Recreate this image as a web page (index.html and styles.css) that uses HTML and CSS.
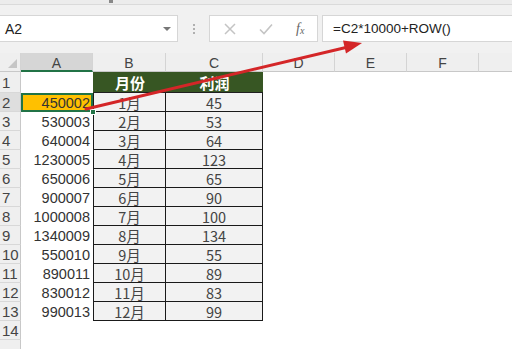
FILE: index.html
```html
<!DOCTYPE html>
<html lang="zh">
<head>
<meta charset="utf-8">
<link rel="stylesheet" href="styles.css">
</head>
<body>
<div class="app">
  <div class="ribbon-edge"><span class="mark"></span></div>
  <div class="fbar">
    <div class="namebox"><span>A2</span><span class="caret"></span></div>
    <div class="grip"><i></i><i></i><i></i></div>
    <div class="funcs">
      <svg class="ico x" width="14" height="14" viewBox="0 0 14 14"><path d="M2 2L12 12M12 2L2 12" stroke="#c4c4c4" stroke-width="1.5" fill="none"/></svg>
      <svg class="ico ok" width="16" height="14" viewBox="0 0 16 14"><path d="M2 7.5L6 11.5L14 2.5" stroke="#c4c4c4" stroke-width="1.6" fill="none"/></svg>
      <span class="fx"><i>f</i><sub>x</sub></span>
    </div>
    <div class="formula">=C2*10000+ROW()</div>
  </div>
  <div class="sheet">
    <div class="corner"><span class="tri"></span></div>
    <div class="ch sel">A</div><div class="ch">B</div><div class="ch">C</div><div class="ch">D</div><div class="ch">E</div><div class="ch">F</div><div class="ch last"></div>

    <div class="rh">1</div><div class="c a1"></div><div class="c hd b">月份</div><div class="c hd">利润</div><div class="c"></div><div class="c"></div><div class="c"></div><div class="c"></div>

    <div class="rh sel">2</div><div class="c num act">450002<span class="handle"></span></div><div class="c t b">1月</div><div class="c t">45</div><div class="c"></div><div class="c"></div><div class="c"></div><div class="c"></div>
    <div class="rh">3</div><div class="c num">530003</div><div class="c t b">2月</div><div class="c t">53</div><div class="c"></div><div class="c"></div><div class="c"></div><div class="c"></div>
    <div class="rh">4</div><div class="c num">640004</div><div class="c t b">3月</div><div class="c t">64</div><div class="c"></div><div class="c"></div><div class="c"></div><div class="c"></div>
    <div class="rh">5</div><div class="c num">1230005</div><div class="c t b">4月</div><div class="c t">123</div><div class="c"></div><div class="c"></div><div class="c"></div><div class="c"></div>
    <div class="rh">6</div><div class="c num">650006</div><div class="c t b">5月</div><div class="c t">65</div><div class="c"></div><div class="c"></div><div class="c"></div><div class="c"></div>
    <div class="rh">7</div><div class="c num">900007</div><div class="c t b">6月</div><div class="c t">90</div><div class="c"></div><div class="c"></div><div class="c"></div><div class="c"></div>
    <div class="rh">8</div><div class="c num">1000008</div><div class="c t b">7月</div><div class="c t">100</div><div class="c"></div><div class="c"></div><div class="c"></div><div class="c"></div>
    <div class="rh">9</div><div class="c num">1340009</div><div class="c t b">8月</div><div class="c t">134</div><div class="c"></div><div class="c"></div><div class="c"></div><div class="c"></div>
    <div class="rh">10</div><div class="c num">550010</div><div class="c t b">9月</div><div class="c t">55</div><div class="c"></div><div class="c"></div><div class="c"></div><div class="c"></div>
    <div class="rh">11</div><div class="c num">890011</div><div class="c t b">10月</div><div class="c t">89</div><div class="c"></div><div class="c"></div><div class="c"></div><div class="c"></div>
    <div class="rh">12</div><div class="c num">830012</div><div class="c t b">11月</div><div class="c t">83</div><div class="c"></div><div class="c"></div><div class="c"></div><div class="c"></div>
    <div class="rh">13</div><div class="c num">990013</div><div class="c t b">12月</div><div class="c t">99</div><div class="c"></div><div class="c"></div><div class="c"></div><div class="c"></div>
    <div class="rh">14</div><div class="c"></div><div class="c"></div><div class="c"></div><div class="c"></div><div class="c"></div><div class="c"></div><div class="c"></div>
    <div class="rh"></div><div class="c"></div><div class="c"></div><div class="c"></div><div class="c"></div><div class="c"></div><div class="c"></div><div class="c"></div>
  </div>
  <svg class="arrow" width="512" height="349" viewBox="0 0 512 349">
    <line x1="86" y1="109" x2="348" y2="47" stroke="#d42628" stroke-width="3" stroke-linecap="round"/>
    <polygon points="362,43 346,53.5 343,40.5" fill="#d42628"/>
  </svg>
</div>
</body>
</html>
```

FILE: styles.css
```css
* { box-sizing: border-box; }
html, body { margin: 0; padding: 0; }
body {
  width: 512px;
  height: 349px;
  overflow: hidden;
  background: #ffffff;
  font-family: "Noto Sans CJK SC", "Liberation Sans", sans-serif;
  color: #333;
}
.app { position: relative; width: 512px; height: 349px; overflow: hidden; }

.ribbon-edge {
  height: 5px;
  background: #ececec;
  border-bottom: 1px solid #dadada;
  position: relative;
}
.ribbon-edge .mark {
  position: absolute;
  left: 109px;
  top: 0;
  width: 4px;
  height: 3px;
  background: #888;
}

.fbar {
  display: flex;
  align-items: stretch;
  height: 48px;
  padding: 10px 0 11px 0;
  background: #f1f1f1;
}
.namebox {
  width: 178px;
  background: #fff;
  border: 1px solid #d6d6d6;
  border-left: none;
  display: flex;
  align-items: center;
  justify-content: space-between;
  padding: 0 6px 0 5px;
  font-family: "Liberation Sans", sans-serif;
  font-size: 14px;
  color: #222;
}
.caret {
  width: 0; height: 0;
  border-left: 4px solid transparent;
  border-right: 4px solid transparent;
  border-top: 4px solid #777;
}
.grip {
  width: 31px;
  display: flex;
  flex-direction: column;
  align-items: center;
  justify-content: center;
  gap: 2px;
}
.grip i { width: 2px; height: 2px; background: #b0b0b0; display: block; }
.funcs {
  width: 109px;
  background: #fff;
  border: 1px solid #d6d6d6;
  display: flex;
  align-items: center;
  padding: 0 0 0 13px;
}
.funcs .x { margin-right: 21px; }
.funcs .ok { margin-right: 22px; }
.fx {
  font-family: "Liberation Serif", serif;
  font-size: 14px;
  color: #666;
  line-height: 1;
}
.fx sub { font-size: 10px; font-style: italic; vertical-align: -1px; }
.formula {
  flex: 1;
  margin-left: 4px;
  background: #fff;
  border: 1px solid #d6d6d6;
  border-right: none;
  display: flex;
  align-items: center;
  padding-left: 10px;
  font-family: "Liberation Sans", sans-serif;
  font-size: 13.5px;
  color: #222;
}

.sheet {
  display: grid;
  grid-template-columns: 21px 72px 73px 97px 72px 72px 72px 1fr;
  grid-template-rows: 19px 21px repeat(14, 19px);
}
.corner, .ch, .rh {
  background: #efefef;
  border-right: 1px solid #d4d4d4;
  border-bottom: 1px solid #c8c8c8;
  color: #444;
}
.corner { position: relative; }
.corner .tri {
  position: absolute;
  right: 3px; bottom: 3px;
  width: 0; height: 0;
  border-left: 9px solid transparent;
  border-bottom: 9px solid #c6c6c6;
}
.ch {
  display: flex;
  align-items: center;
  justify-content: center;
  font-family: "Liberation Sans", sans-serif;
  font-size: 14px;
  padding-top: 2px;
}
.ch.sel { background: #d6d6d6; border-bottom: 2px solid #217346; }
.ch.last { border-right: none; }
.rh {
  display: flex;
  align-items: center;
  padding-left: 2px;
  font-family: "Liberation Sans", sans-serif;
  font-size: 15px;
  border-bottom-color: #d8d8d8;
  border-right-color: #c8c8c8;
}
.rh.sel { background: #dedede; }
.c {
  display: flex;
  align-items: center;
  font-size: 14px;
  position: relative;
}
.num {
  justify-content: flex-end;
  padding-right: 3px;
  font-family: "Liberation Sans", sans-serif;
  font-size: 14.5px;
  color: #333;
}
.act {
  background: #ffc000;
  outline: 2px solid #217346;
  outline-offset: -2px;
  z-index: 1;
}
.handle {
  position: absolute;
  right: -3px;
  bottom: -3px;
  width: 6px;
  height: 6px;
  background: #217346;
  border: 1px solid #fff;
}
.a1 { border-bottom: 0; }
.hd {
  background: #375623;
  color: #fff;
  font-weight: bold;
  font-size: 15px;
  justify-content: center;
  border-bottom: 1px solid #1f1f1f;
}
.t {
  background: #f2f2f2;
  justify-content: center;
  border-right: 1px solid #1a1a1a;
  border-bottom: 1px solid #1a1a1a;
  color: #444;
  font-size: 14.5px;
}
.t.b { border-left: 1px solid #1a1a1a; }
.hd.b { border-left: 1px solid #375623; }

.arrow {
  position: absolute;
  left: 0; top: 0;
  pointer-events: none;
  z-index: 5;
}
```
